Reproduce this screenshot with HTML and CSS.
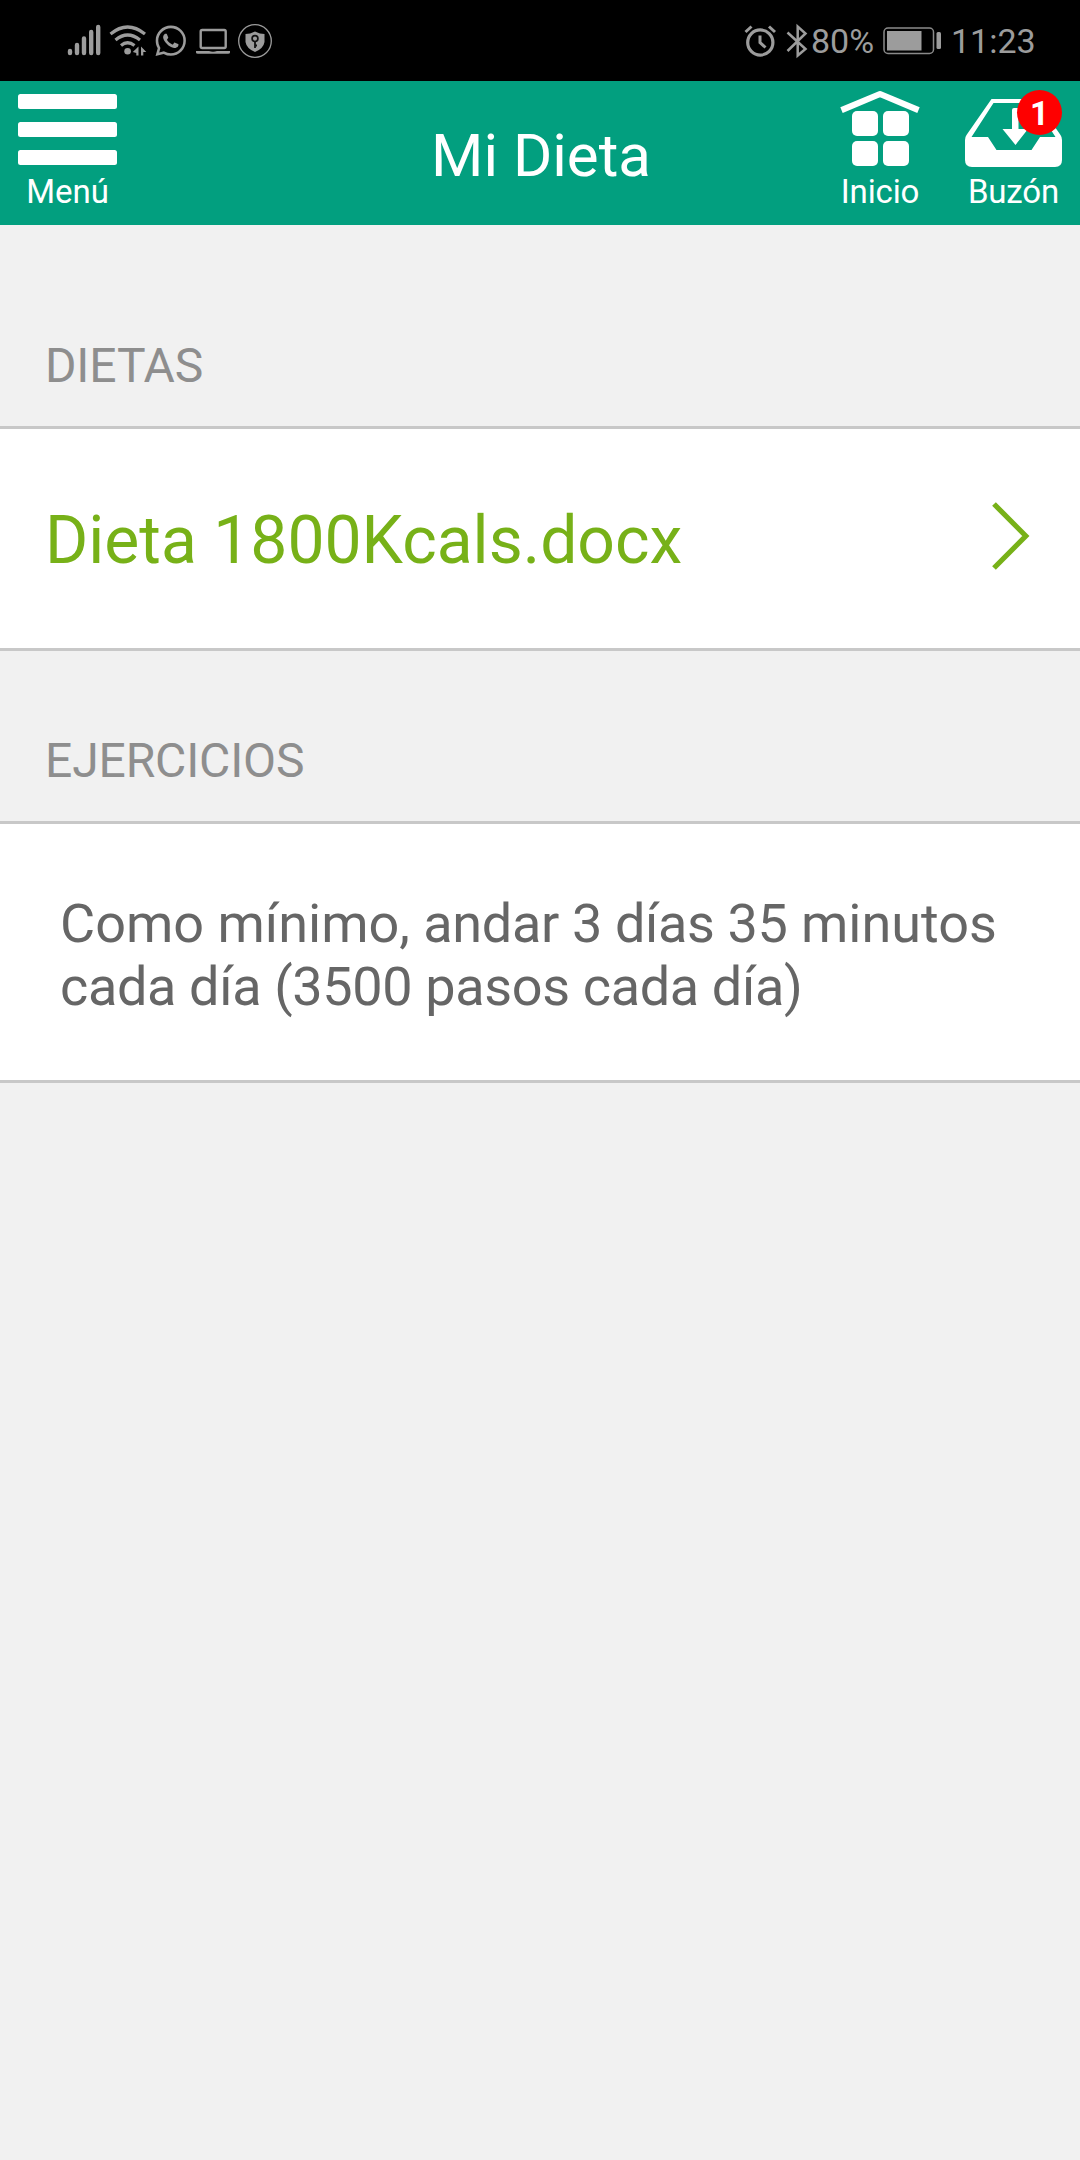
FILE: index.html
```html
<!DOCTYPE html>
<html lang="es">
<head>
<meta charset="utf-8">
<title>Mi Dieta</title>
<link rel="stylesheet" href="styles.css">
</head>
<body>
<div class="status">
  <svg class="status-icons" width="214" height="81" viewBox="0 0 214 81">
    <g stroke="#9c9c9c" stroke-width="4.4" stroke-linecap="round">
      <path d="M10 51V53M17 45V53M24 38.500V53M31.200 32V53M38.200 27V53"/>
    </g>
    <g fill="none" stroke="#9c9c9c" stroke-width="3.200">
      <path d="M50.500 34Q67.500 20 85 34M55.500 40Q67.500 30 80 40M61 45.500Q67.500 40 74.500 45.500"/>
    </g>
    <circle cx="67.600" cy="51.300" r="3.300" fill="#9c9c9c"/>
    <path d="M78.500 46.500V55.500H76.300V53L72.800 52ZM81 46.500L86.300 52H83.300V55.500H81Z" fill="#9c9c9c"/>
    <g fill="#9c9c9c" transform="translate(95.500 25.600) scale(1.270)">
      <path d="M17.472 14.382c-.297-.149-1.758-.867-2.030-.967-.273-.099-.471-.148-.670.150-.197.297-.767.966-.940 1.164-.173.199-.347.223-.644.075-.297-.150-1.255-.463-2.390-1.475-.883-.788-1.480-1.761-1.653-2.059-.173-.297-.018-.458.130-.606.134-.133.298-.347.446-.520.149-.174.198-.298.298-.497.099-.198.050-.371-.025-.520-.075-.149-.669-1.612-.916-2.207-.242-.579-.487-.500-.669-.510-.173-.008-.371-.010-.570-.010-.198 0-.520.074-.792.372-.272.297-1.040 1.016-1.040 2.479 0 1.462 1.065 2.875 1.213 3.074.149.198 2.096 3.200 5.077 4.487.709.306 1.262.489 1.694.625.712.227 1.360.195 1.871.118.571-.085 1.758-.719 2.006-1.413.248-.694.248-1.289.173-1.413-.074-.124-.272-.198-.570-.347m-5.421 7.403h-.004a9.870 9.870 0 01-5.031-1.378l-.361-.214-3.741.982.998-3.648-.235-.374a9.860 9.860 0 01-1.510-5.260c.001-5.450 4.436-9.884 9.888-9.884 2.640 0 5.122 1.030 6.988 2.898a9.825 9.825 0 012.893 6.994c-.003 5.450-4.437 9.884-9.885 9.884m8.413-18.297A11.815 11.815 0 0012.050 0C5.495 0 .160 5.335.157 11.892c0 2.096.547 4.142 1.588 5.945L.057 24l6.305-1.654a11.882 11.882 0 005.683 1.448h.005c6.554 0 11.890-5.335 11.893-11.893a11.821 11.821 0 00-3.480-8.413Z"/>
    </g>
    <rect x="140.700" y="30" width="25" height="18" rx="1.500" fill="none" stroke="#9c9c9c" stroke-width="2.400"/>
    <path d="M136 51H149Q153 52.500 157 51H170V52.500Q170 53.700 168 53.700H138Q136 53.700 136 52.500Z" fill="#9c9c9c"/>
    <circle cx="195" cy="41" r="16.300" fill="none" stroke="#9c9c9c" stroke-width="1.300"/>
    <path d="M195 31.500Q200 34 204.500 34V42Q203.500 48.500 195 52Q186.500 48.500 185.500 42V34Q190 34 195 31.500Z" fill="#9c9c9c"/>
    <circle cx="195" cy="38.600" r="2.900" fill="none" stroke="#111" stroke-width="1.700"/>
    <path d="M195 41.500V48M195 45.500H197" stroke="#111" stroke-width="1.800"/>
  </svg>
  <div class="status-right">
    <svg width="64" height="40" viewBox="0 0 64 40" fill="none" stroke="#9c9c9c">
      <circle cx="16.300" cy="21.500" r="12.600" stroke-width="3.200"/>
      <path d="M16 14.500V21.500L21.500 26.500" stroke-width="3"/>
      <path d="M1.500 11L7.500 5.500M25 5.500L31 11" stroke-width="3"/>
      <path d="M43.500 11.500L61.500 28L53.700 34.500V5.500L61.500 12.500L43.500 30" stroke-width="2.500"/>
    </svg>
    <span class="percent">80%</span>
    <svg class="battery" width="60" height="28" viewBox="0 0 60 28">
      <rect x="1" y="1" width="49.500" height="25.500" rx="4" fill="none" stroke="#8a8a8a" stroke-width="1.500"/>
      <rect x="4" y="4" width="34.500" height="19.500" fill="#9c9c9c"/>
      <rect x="53.500" y="5" width="4.500" height="17" rx="1.500" fill="#9c9c9c"/>
    </svg>
    <span class="clock">11:23</span>
  </div>
</div>
<header class="bar">
  <div class="bar-item bar-menu">
    <svg width="99" height="80" viewBox="0 0 99 80" fill="#fff">
      <rect y="4" width="99" height="15" rx="2.500"/>
      <rect y="32" width="99" height="15" rx="2.500"/>
      <rect y="60" width="99" height="15" rx="2.500"/>
    </svg>
    <span>Menú</span>
  </div>
  <h1 class="bar-title">Mi Dieta</h1>
  <nav class="bar-actions">
    <div class="bar-item bar-home">
      <svg width="80" height="80" viewBox="0 0 80 80" fill="#fff">
        <path d="M1.500 20.200L40 4L78.500 20.200" fill="none" stroke="#fff" stroke-width="6.200" stroke-linejoin="round"/>
        <rect x="12" y="21" width="26" height="25" rx="5"/>
        <rect x="43" y="21" width="26" height="25" rx="5"/>
        <rect x="12" y="51" width="26" height="25" rx="5"/>
        <rect x="43" y="51" width="26" height="25" rx="5"/>
      </svg>
      <span>Inicio</span>
    </div>
    <div class="bar-item bar-mail">
      <svg width="97" height="80" viewBox="0 0 97 80" fill="#fff">
        <path fill-rule="evenodd" d="M26.500 9H70.500L95.500 45Q97 47 97 50V70Q97 77 90 77H7Q0 77 0 70V50Q0 47 1.500 45ZM28.500 13L6.500 47H23L31.500 60H66.500L75 47H90.500L68.500 13Z"/>
        <path d="M47 20Q47 18 49 18H53.500V39H63L50.500 55L37.500 39H47Z"/>
      </svg>
      <b class="badge">1</b>
      <span>Buzón</span>
    </div>
  </nav>
</header>
<main>
  <section>
    <h2 class="heading heading-first">DIETAS</h2>
    <a class="row diet">
      <span>Dieta 1800Kcals.docx</span>
      <svg width="40" height="70" viewBox="0 0 40 70" fill="none" stroke="#77b118" stroke-width="5.200">
        <path d="M2 3L33.800 35L2 67"/>
      </svg>
    </a>
  </section>
  <section>
    <h2 class="heading">EJERCICIOS</h2>
    <p class="row exercise">Como mínimo, <span class="tight">andar 3 días 35</span> minutos<br><span class="tight">cada día (3500 pasos cada día)</span></p>
  </section>
</main>
</body>
</html>
```
FILE: styles.css
```css
* { box-sizing: border-box; margin: 0; }
body {
  min-height: 2160px;
  background: #f1f1f1;
  font-family: Roboto, "Liberation Sans", sans-serif;
}
svg { display: block; }
.status {
  height: 81px;
  background: #000;
  color: #9c9c9c;
  display: flex;
  justify-content: space-between;
  align-items: center;
  padding: 0 45px 0 60px;
}
.status-right {
  display: flex;
  align-items: center;
  font-size: 34px;
  line-height: 40px;
}
.percent { width: 75px; padding: 1px 0 0 3px; }
.clock { width: 84px; margin-left: 8px; padding-top: 1px; white-space: nowrap; }
.bar {
  height: 144px;
  background: #029f7f;
  color: #fff;
  display: grid;
  grid-template-columns: 324px 1fr 324px;
}
.bar-title {
  font-size: 60px;
  font-weight: 400;
  line-height: 149px;
  text-align: center;
  padding-left: 2px;
}
.bar-item {
  display: flex;
  flex-direction: column;
  align-items: center;
  padding-top: 9px;
  font-size: 33px;
  line-height: 38px;
  position: relative;
}
.bar-item span { padding-top: 3px; }
.bar-menu { width: 99px; margin-left: 18px; }
.bar-actions { display: flex; gap: 45px; justify-content: flex-end; padding-right: 18px; letter-spacing: -0.15px; }
.bar-home { width: 80px; }
.bar-mail { width: 97px; }
.badge {
  position: absolute;
  right: 0;
  top: 9px;
  width: 45px;
  height: 45px;
  border-radius: 50%;
  background: #fe0000;
  font-size: 33px;
  font-weight: 700;
  line-height: 47px;
  text-align: center;
}
.heading {
  height: 170px;
  padding: 82px 0 0 45px;
  color: #8e8e8e;
  font-size: 48px;
  font-weight: 400;
  line-height: 56px;
  letter-spacing: -0.14px;
}
.heading-first { height: 201px; padding-top: 113px; }
.row {
  background: #fff;
  border: solid #c8c8c8;
  border-width: 3px 0;
}
.diet {
  height: 225px;
  display: flex;
  align-items: center;
  justify-content: space-between;
  padding: 0 48px 5px 45px;
  color: #77b118;
  font-size: 66px;
}
.diet span { padding-top: 9px; }
.exercise {
  height: 262px;
  padding: 68px 60px 0;
  color: #666;
  font-size: 54px;
  line-height: 63px;
  white-space: nowrap;
}
.tight { letter-spacing: -0.36px; }
```
